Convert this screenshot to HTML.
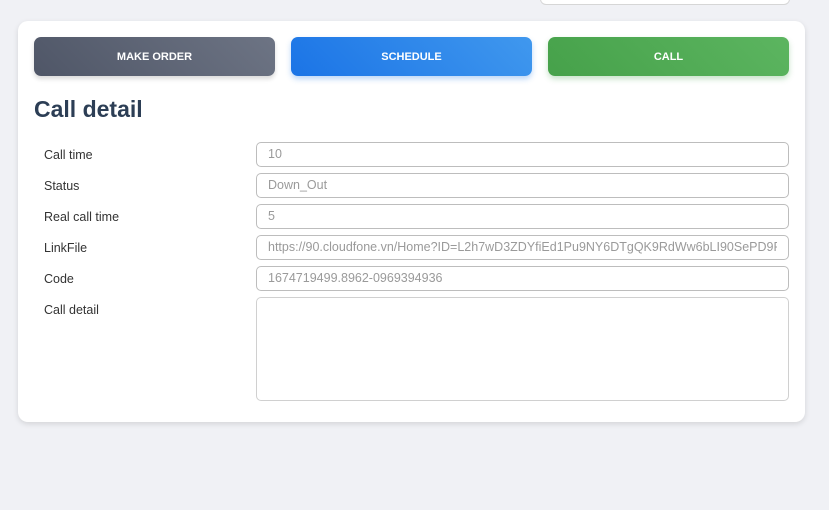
<!DOCTYPE html>
<html><head><meta charset="utf-8"><style>
*{box-sizing:border-box;margin:0;padding:0}
body{width:829px;height:510px;background:#f0f1f5;font-family:"Liberation Sans",sans-serif;position:relative;overflow:hidden}
.top{position:absolute;left:540px;top:-10px;width:250px;height:15px;background:#fff;border:1px solid #d6d6d6;border-radius:6px}
.card{position:absolute;left:18px;top:21px;width:787px;height:401px;background:#fff;border-radius:10px;box-shadow:0 2px 6px rgba(0,0,0,.12)}
.btn{position:absolute;top:16px;width:241px;height:39px;border-radius:7px;color:#fff;font-weight:bold;font-size:11px;display:flex;align-items:center;justify-content:center;box-shadow:0 3px 5px rgba(0,0,0,.15)}
.b1{left:16px;background:linear-gradient(45deg,#4f5667,#6d7484)}
.b2{left:273px;background:linear-gradient(45deg,#1b74e6,#4098ee);box-shadow:0 3px 6px rgba(30,120,230,.3)}
.b3{left:530px;background:linear-gradient(45deg,#46a14a,#5cb560);box-shadow:0 3px 6px rgba(70,160,75,.3)}
h1{position:absolute;left:16px;top:75px;font-size:23px;font-weight:bold;color:#2c3e55}
.lab{position:absolute;left:26px;font-size:12.5px;color:#333}
.inp{position:absolute;left:238px;width:533px;height:25px;border:1px solid #bdbdbd;border-radius:5px;font-size:12.5px;color:#9a9a9a;padding:0 11px;line-height:23px;white-space:nowrap;overflow:hidden}
.clip{display:block;width:509px;overflow:hidden}
</style></head><body>
<div class="top"></div>
<div class="card">
<div class="btn b1">MAKE ORDER</div>
<div class="btn b2">SCHEDULE</div>
<div class="btn b3">CALL</div>
<h1>Call detail</h1>
<div class="lab" style="top:127px">Call time</div><div class="inp" style="top:121px">10</div>
<div class="lab" style="top:158px">Status</div><div class="inp" style="top:152px">Down_Out</div>
<div class="lab" style="top:189px">Real call time</div><div class="inp" style="top:183px">5</div>
<div class="lab" style="top:220px">LinkFile</div><div class="inp" style="top:214px"><span class="clip">https://90.cloudfone.vn/Home?ID=L2h7wD3ZDYfiEd1Pu9NY6DTgQK9RdWw6bLI90SePD9FZ3abc</span></div>
<div class="lab" style="top:251px">Code</div><div class="inp" style="top:245px">1674719499.8962-0969394936</div>
<div class="lab" style="top:282px">Call detail</div><div class="inp" style="top:276px;height:104px;border-color:#d0d0d0"></div>
</div>
</body></html>
